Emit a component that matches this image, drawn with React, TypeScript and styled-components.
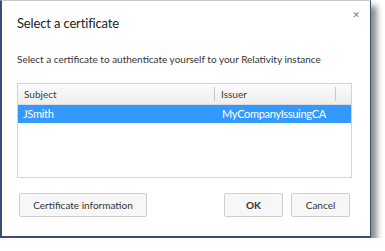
import React from "react";
import styled, { createGlobalStyle } from "styled-components";

const GlobalStyle = createGlobalStyle`
  body {
    margin: 0;
    background: #ffffff;
    font-family: Lato, "Noto Sans", sans-serif;
  }
`;

const Dialog = styled.div`
  box-sizing: border-box;
  width: 371px;
  height: 238px;
  background: #ffffff;
  border-top: 1px solid #c9c9c9;
  border-left: 2px solid #3a4d72;
  border-right: 1px solid #3a4d72;
  border-bottom: 2px solid #3a4d72;
  box-shadow: 6px 6px 6px rgba(0, 0, 0, 0.45);
  padding: 12px 18px 0 15px;
  display: flex;
  flex-direction: column;
`;

const TitleBar = styled.div`
  display: flex;
  justify-content: space-between;
  align-items: flex-start;
`;

const Title = styled.h1`
  margin: 0;
  font-size: 13px;
  letter-spacing: -0.15px;
  font-weight: 400;
  color: #222;
  line-height: 20px;
`;

const Close = styled.span`
  font-size: 9px;
  color: #7a7a7a;
  margin-top: -3px;
  margin-right: -8px;
  font-weight: 700;
  font-family: "DejaVu Sans", sans-serif;
`;

const Message = styled.p`
  margin: 18px 0 0;
  font-size: 10px;
  color: #333;
  line-height: 16px;
  white-space: nowrap;
`;

const Table = styled.div`
  margin-top: 16px;
  height: 95px;
  box-sizing: border-box;
  border: 1px solid #d4d4d4;
`;

const Row = styled.div<{ $header?: boolean; $selected?: boolean }>`
  display: grid;
  grid-template-columns: 196px 1fr;
  height: ${(p) => (p.$header ? "20px" : "18px")};
  align-items: center;
  color: ${(p) => (p.$selected ? "#fff" : "#333")};
  background: ${(p) =>
    p.$header
      ? "linear-gradient(#fbfbfb, #eeeeee)"
      : p.$selected
      ? "#3399ff"
      : "transparent"};
  border-bottom: ${(p) => (p.$header ? "1px solid #dcdcdc" : "none")};
`;

const Cell = styled.div<{ $second?: boolean }>`
  padding-left: ${(p) => (p.$second ? "8px" : "5px")};
  font-size: 11px;
  letter-spacing: -0.3px;
  white-space: nowrap;
  line-height: 14px;
`;

const HeaderCell = styled.div<{ $divider?: boolean }>`
  color: #3a3a3a;
  font-size: 10px;
  height: 14px;
  line-height: 14px;
  white-space: nowrap;
  margin-right: 15px;
  padding-left: 6px;
  border-left: ${(p) => (p.$divider ? "1px solid #c8c8c8" : "none")};
  border-right: ${(p) => (p.$divider ? "1px solid #c8c8c8" : "none")};
`;

const Footer = styled.div`
  display: flex;
  align-items: center;
  margin-top: 15px;
  padding: 0 2px;
`;

const Button = styled.button<{ $bold?: boolean; $width: number }>`
  height: 24px;
  width: ${(p) => p.$width}px;
  box-sizing: border-box;
  background: #f7f7f7;
  border: 1px solid #cfcfcf;
  border-radius: 2px;
  font-family: inherit;
  font-size: 10px;
  font-weight: ${(p) => (p.$bold ? 700 : 400)};
  color: #333;
  padding: 0;
`;

const Spacer = styled.div`
  flex: 1;
`;

const ButtonGroup = styled.div`
  display: flex;
  gap: 8px;
`;

export default function App() {
  return (
    <>
      <GlobalStyle />
      <Dialog>
        <TitleBar>
          <Title>Select a certificate</Title>
          <Close>✕</Close>
        </TitleBar>
        <Message>
          Select a certificate to authenticate yourself to your Relativity instance
        </Message>
        <Table>
          <Row $header>
            <HeaderCell>Subject</HeaderCell>
            <HeaderCell $divider>Issuer</HeaderCell>
          </Row>
          <Row $selected>
            <Cell>JSmith</Cell>
            <Cell $second>MyCompanyIssuingCA</Cell>
          </Row>
        </Table>
        <Footer>
          <Button $width={128}>Certificate information</Button>
          <Spacer />
          <ButtonGroup>
            <Button $bold $width={59}>OK</Button>
            <Button $width={59}>Cancel</Button>
          </ButtonGroup>
        </Footer>
      </Dialog>
    </>
  );
}
